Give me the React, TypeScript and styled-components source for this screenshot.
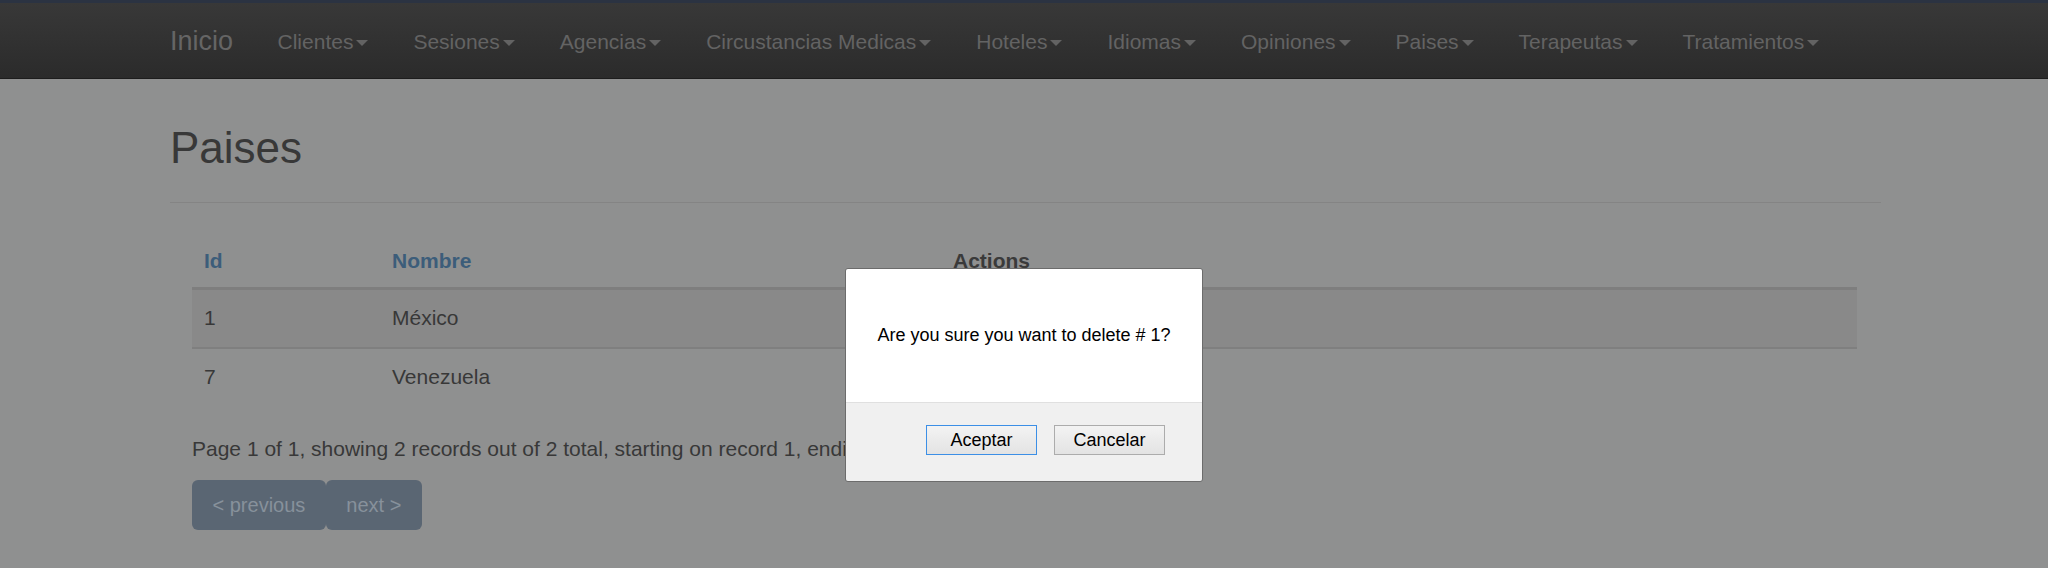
import React from 'react'
import styled, { createGlobalStyle } from 'styled-components'

interface Pais {
  id: number
  nombre: string
}

const paises: Pais[] = [
  { id: 1, nombre: 'México' },
  { id: 7, nombre: 'Venezuela' },
]

const menus = [
  'Clientes',
  'Sesiones',
  'Agencias',
  'Circustancias Medicas',
  'Hoteles',
  'Idiomas',
  'Opiniones',
  'Paises',
  'Terapeutas',
  'Tratamientos',
]

const GlobalStyle = createGlobalStyle`
  html, body {
    margin: 0;
    padding: 0;
    background: #8f9090;
    font-family: 'Liberation Sans', Arial, sans-serif;
  }
  * {
    box-sizing: border-box;
  }
`

const App = () => {
  return (
    <>
      <GlobalStyle />
      <TopStrip />
      <Navbar>
        <Brand>Inicio</Brand>
        <NavList>
          {menus.map((item) => (
            <NavItem key={item}>
              {item}
              <Caret />
            </NavItem>
          ))}
        </NavList>
      </Navbar>

      <Container>
        <PageTitle>Paises</PageTitle>
        <Divider />

        <TableBox>
          <Table>
            <thead>
              <tr>
                <Th style={{ width: 188 }}>
                  <SortLink>Id</SortLink>
                </Th>
                <Th style={{ width: 561 }}>
                  <SortLink>Nombre</SortLink>
                </Th>
                <Th>Actions</Th>
              </tr>
            </thead>
            <tbody>
              {paises.map((pais, i) => (
                <Row key={pais.id} $striped={i % 2 === 0}>
                  <Td $first={i === 0}>{pais.id}</Td>
                  <Td $first={i === 0}>{pais.nombre}</Td>
                  <Td $first={i === 0}></Td>
                </Row>
              ))}
            </tbody>
          </Table>

          <PagingInfo>
            Page 1 of 1, showing 2 records out of 2 total, starting on record 1, ending on 2
          </PagingInfo>
          <Pager>
            <PagerBtn>&lt; previous</PagerBtn>
            <PagerBtn>next &gt;</PagerBtn>
          </Pager>
        </TableBox>
      </Container>

      {/* confirm del navegador */}
      <Dialog>
        <DialogBody>Are you sure you want to delete # 1?</DialogBody>
        <DialogFooter>
          <DialogBtn $focused>Aceptar</DialogBtn>
          <DialogBtn>Cancelar</DialogBtn>
        </DialogFooter>
      </Dialog>
    </>
  )
}

export default App

const TopStrip = styled.div`
  height: 3px;
  background: #2b3342;
`

// navbar
const Navbar = styled.div`
  display: flex;
  align-items: center;
  height: 76px;
  padding-left: 170px;
  background: linear-gradient(#383838, #2b2b2b);
  border-bottom: 1px solid #1d1d1d;
`
const Brand = styled.a`
  font-size: 27px;
  color: #656565;
  margin-right: 22px;
  padding-top: 1px;
`
const NavList = styled.div`
  display: flex;
  align-items: center;
`
const NavItem = styled.a`
  display: flex;
  align-items: center;
  padding: 2px 22.5px 0;
  font-size: 21px;
  color: #636363;
`
const Caret = styled.span`
  display: inline-block;
  width: 0;
  height: 0;
  margin-left: 3px;
  margin-top: 2px;
  border-top: 6px solid #636363;
  border-left: 6px solid transparent;
  border-right: 6px solid transparent;
`

// contenido
const Container = styled.div`
  width: 1711px;
  margin-left: 170px;
`
const PageTitle = styled.h1`
  margin: 45px 0 0;
  font-size: 44px;
  line-height: 48px;
  font-weight: 400;
  color: #383838;
`
const Divider = styled.hr`
  margin: 30px 0 0;
  border: 0;
  border-top: 1px solid #848484;
`
const TableBox = styled.div`
  padding: 0 24px 0 22px;
`
const Table = styled.table`
  width: 100%;
  margin-top: 27px;
  border-collapse: collapse;
  font-size: 21px;
  color: #383838;
`
const Th = styled.th`
  padding: 15px 12px 11px;
  line-height: 31px;
  text-align: left;
  font-weight: 700;
  color: #3a3a3a;
  border-bottom: 3px solid #7e7e7e;
`
const SortLink = styled.a`
  color: #3c5d7a;
`
const Row = styled.tr<{ $striped?: boolean }>`
  background: ${({ $striped }) => ($striped ? '#898989' : 'transparent')};
`
const Td = styled.td<{ $first?: boolean }>`
  padding: 12px 12px 14px;
  line-height: 31px;
  border-top: ${({ $first }) => ($first ? 'none' : '2px solid #7f7f7f')};
`
const PagingInfo = styled.p`
  margin: 28px 0 0;
  font-size: 21px;
  line-height: 30px;
  color: #383838;
`
const Pager = styled.div`
  display: flex;
  margin-top: 16px;
`
const PagerBtn = styled.span`
  height: 50px;
  padding: 0 20.5px;
  line-height: 50px;
  font-size: 20px;
  color: #87919b;
  background: #5a6673;
  border-radius: 6px;
`

// dialogo
const Dialog = styled.div`
  position: fixed;
  left: 845px;
  top: 268px;
  width: 358px;
  height: 214px;
  display: flex;
  flex-direction: column;
  border: 1px solid #6c6c6c;
  border-radius: 3px;
  overflow: hidden;
  font-family: 'Liberation Sans', Arial, sans-serif;
`
const DialogBody = styled.div`
  display: flex;
  align-items: center;
  justify-content: center;
  height: 133px;
  background: #ffffff;
  font-size: 18px;
  color: #000000;
`
const DialogFooter = styled.div`
  flex: 1;
  display: flex;
  align-items: center;
  justify-content: flex-end;
  gap: 17px;
  padding: 0 37px 4px 0;
  background: #f0f0f0;
  border-top: 1px solid #e0e0e0;
`
const DialogBtn = styled.button<{ $focused?: boolean }>`
  width: 111px;
  height: 30px;
  padding: 0;
  font-family: 'Liberation Sans', Arial, sans-serif;
  font-size: 18px;
  color: #000000;
  background: linear-gradient(#f3f3f3, #e3e3e3);
  border: 1px solid ${({ $focused }) => ($focused ? '#3c8fe6' : '#acacac')};
  border-radius: 0;
`
